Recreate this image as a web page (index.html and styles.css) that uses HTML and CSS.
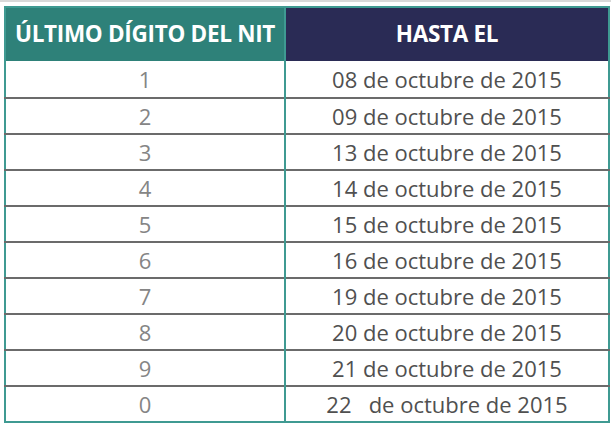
FILE: index.html
```html
<!DOCTYPE html>
<html lang="es">
<head>
<meta charset="utf-8">
<link rel="stylesheet" href="styles.css">
</head>
<body>
<div class="topline"></div>
<table class="nit">
  <thead>
    <tr><th class="h-left">ÚLTIMO DÍGITO DEL NIT</th><th class="h-right">HASTA EL</th></tr>
  </thead>
  <tbody>
    <tr><td class="d">1</td><td class="f">08 de octubre de 2015</td></tr>
    <tr><td class="d">2</td><td class="f">09 de octubre de 2015</td></tr>
    <tr><td class="d">3</td><td class="f">13 de octubre de 2015</td></tr>
    <tr><td class="d">4</td><td class="f">14 de octubre de 2015</td></tr>
    <tr><td class="d">5</td><td class="f">15 de octubre de 2015</td></tr>
    <tr><td class="d">6</td><td class="f">16 de octubre de 2015</td></tr>
    <tr><td class="d">7</td><td class="f">19 de octubre de 2015</td></tr>
    <tr><td class="d">8</td><td class="f">20 de octubre de 2015</td></tr>
    <tr><td class="d">9</td><td class="f">21 de octubre de 2015</td></tr>
    <tr><td class="d">0</td><td class="f">22&nbsp;&nbsp; de octubre de 2015</td></tr>
  </tbody>
</table>
</body>
</html>
```
FILE: styles.css
```css
html, body {
  margin: 0;
  padding: 0;
  background: #ffffff;
}
body {
  font-family: "Open Sans", "Liberation Sans", sans-serif;
  width: 611px;
  height: 431px;
  overflow: hidden;
}
.topline {
  height: 2px;
  background: #d9d9d9;
  margin-bottom: 4px;
}
.nit {
  margin-left: 4px;
  width: 606px;
  border-collapse: collapse;
  border: 2px solid #3f9a92;
}
.nit th {
  height: 53px;
  padding: 0;
  color: #ffffff;
  font-weight: 700;
  font-size: 22.5px;
  line-height: 1;
  letter-spacing: -0.3px;
  text-align: center;
}
.h-left {
  background: #2e8179;
  width: 278px;
  border-right: 2px solid #3f9a92;
}
.h-right {
  background: #2a2b55;
}
.nit td {
  height: 34px;
  padding: 0;
  text-align: center;
  font-size: 22px;
  line-height: 1;
  border-top: 2px solid #6b6b6b;
}
.nit tbody tr:first-child td {
  border-top: none;
  height: 36px;
}
.d {
  color: #858585;
  border-right: 2px solid #3f9a92;
}
.f {
  color: #505050;
  letter-spacing: 0;
}
```
